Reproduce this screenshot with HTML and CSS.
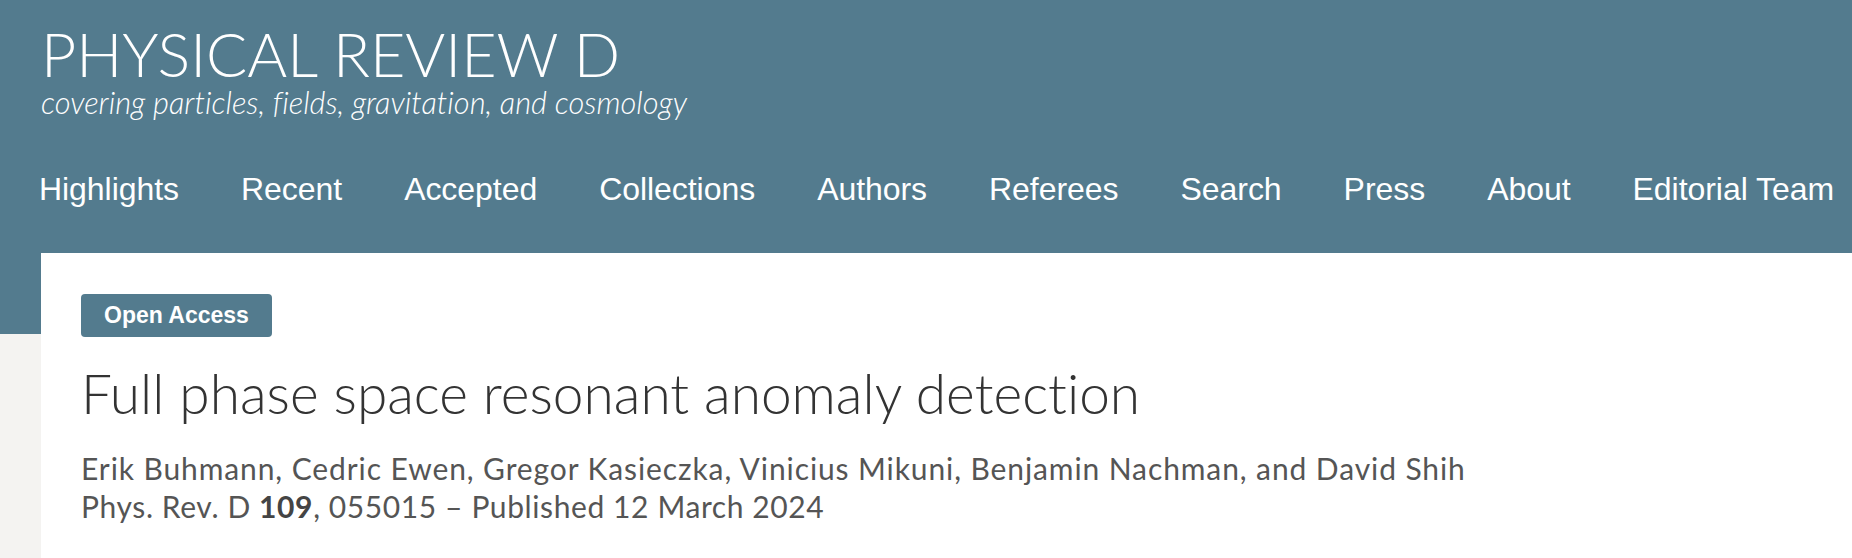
FILE: index.html
```html
<!DOCTYPE html>
<html lang="en">
<head>
<meta charset="utf-8">
<title>Full phase space resonant anomaly detection - Physical Review D</title>
<link rel="stylesheet" href="styles.css">
</head>
<body>
<div class="page">
  <header class="masthead">
    <div class="brand">
      <h1 class="journal">PHYSICAL REVIEW D</h1>
      <p class="tagline">covering particles, fields, gravitation, and cosmology</p>
    </div>
    <nav class="nav">
      <a href="#">Highlights</a>
      <a href="#">Recent</a>
      <a href="#">Accepted</a>
      <a href="#">Collections</a>
      <a href="#">Authors</a>
      <a href="#">Referees</a>
      <a href="#">Search</a>
      <a href="#">Press</a>
      <a href="#">About</a>
      <a href="#">Editorial Team</a>
    </nav>
  </header>
  <main class="card">
    <span class="badge">Open Access</span>
    <h2 class="title">Full phase space resonant anomaly detection</h2>
    <p class="authors">Erik Buhmann, Cedric Ewen, Gregor Kasieczka, Vinicius Mikuni, Benjamin Nachman, and David Shih</p>
    <p class="cite">Phys. Rev. D <b>109</b>, 055015 – Published 12 March 2024</p>
  </main>
</div>
</body>
</html>
```
FILE: styles.css
```css
html, body {
  margin: 0;
  padding: 0;
}
body {
  background: linear-gradient(#537b8e 0, #537b8e 334px, #f4f3f1 334px);
  min-height: 558px;
  overflow: hidden;
  font-variant-ligatures: none;
}
.page {
  width: 1852px;
}
.masthead {
  color: #fff;
  height: 253px;
  box-sizing: border-box;
}
.brand {
  padding: 22px 0 0 41px;
}
.journal {
  margin: 0;
  font-family: "Lato", sans-serif;
  font-weight: 300;
  font-size: 61px;
  line-height: 64px;
}
.tagline {
  margin: 0;
  font-family: "Lato", sans-serif;
  font-weight: 300;
  font-style: italic;
  font-size: 30.8px;
  line-height: 34px;
}
.nav {
  display: flex;
  gap: 62px;
  padding: 49px 0 0 39px;
}
.nav a {
  color: #fff;
  text-decoration: none;
  font-family: "Liberation Sans", Arial, sans-serif;
  font-size: 32px;
  line-height: 40px;
  letter-spacing: -0.05px;
}
.card {
  background: #fff;
  margin-left: 41px;
  height: 305px;
  box-sizing: border-box;
  padding: 41px 0 0 40px;
}
.badge {
  display: inline-block;
  background: #537b8e;
  color: #fff;
  font-family: "Liberation Sans", Arial, sans-serif;
  font-weight: 700;
  font-size: 23px;
  line-height: 43px;
  padding: 0 23px;
  border-radius: 4px;
}
.title {
  margin: 24px 0 0 0;
  font-family: "Lato", sans-serif;
  font-weight: 300;
  font-size: 55px;
  line-height: 64px;
  color: #333;
}
.authors, .cite {
  margin: 0;
  font-family: "Lato", sans-serif;
  font-weight: 400;
  font-size: 30px;
  line-height: 38px;
  letter-spacing: 0.9px;
  color: #555;
}
.authors {
  margin-top: 24px;
}
.cite {
  letter-spacing: 0.6px;
}
.cite b {
  font-weight: 700;
  color: #444;
}
```
